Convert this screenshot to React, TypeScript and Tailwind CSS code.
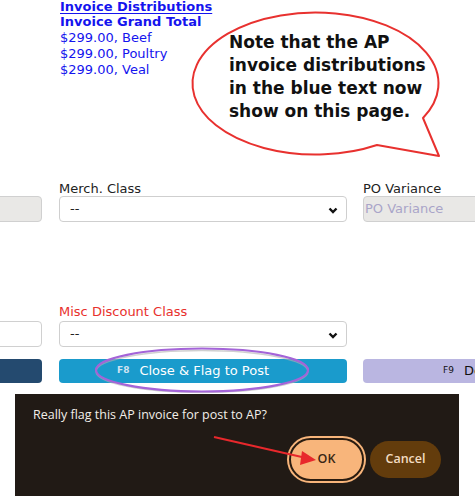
import React from "react";

const page = { fontFamily: '"DejaVu Sans", Verdana, sans-serif' };
const dialogFont = { fontFamily: '"Open Sans", "Noto Sans", sans-serif' };

function Chevron() {
  return (
    <svg width="10" height="7" viewBox="0 0 10 7" className="absolute right-[8px] top-[10px]">
      <polyline points="1.5,1.5 5,5 8.5,1.5" fill="none" stroke="#111" strokeWidth="2.4" />
    </svg>
  );
}

function Select() {
  return (
    <div className="relative h-[26px] rounded-[4px] border border-[#cfcfcf] bg-white">
      <span className="absolute left-[10px] top-[4px] text-[13px] leading-4 text-[#222]">--</span>
      <Chevron />
    </div>
  );
}

export default function App() {
  return (
    <div className="relative h-[496px] w-[475px] overflow-hidden bg-white" style={page}>
      {/* distributions */}
      <div className="-mt-[1px] pl-[60px] text-[13px] leading-4 text-[#1414ee]">
        <div className="font-bold underline underline-offset-2">Invoice Distributions</div>
        <div className="-mt-[1px] font-bold">Invoice Grand Total</div>
        <div>$299.00, Beef</div>
        <div>$299.00, Poultry</div>
        <div>$299.00, Veal</div>
      </div>

      {/* row 1 */}
      <div className="mt-[103px] flex text-[13px]">
        <div className="-ml-[40px] w-[82px] shrink-0">
          <div className="h-[15px]" />
          <div className="h-[26px] rounded-[4px] border border-[#d0d0d0] bg-[#e9e8e6]" />
        </div>
        <div className="ml-[17px] w-[288px] shrink-0">
          <div className="h-[15px] leading-4 text-[#222]">Merch. Class</div>
          <Select />
        </div>
        <div className="ml-[16px] w-[288px] shrink-0">
          <div className="h-[15px] leading-4 text-[#222]">PO Variance</div>
          <div className="h-[26px] rounded-[4px] border border-[#d0d0d0] bg-[#e9e8e6] pl-[1px] pt-[4px] leading-4 text-[#a9a5c9]">
            PO Variance
          </div>
        </div>
      </div>

      {/* row 2 */}
      <div className="mt-[82px] flex text-[13px]">
        <div className="-ml-[40px] w-[82px] shrink-0">
          <div className="h-[17px]" />
          <div className="h-[26px] rounded-[4px] border border-[#d0d0d0] bg-white" />
        </div>
        <div className="ml-[17px] w-[288px] shrink-0">
          <div className="h-[17px] leading-4 text-[#e8302c]">Misc Discount Class</div>
          <Select />
        </div>
      </div>

      {/* buttons */}
      <div className="mt-[12px] flex h-[24px]">
        <div className="-ml-[40px] w-[82px] shrink-0 rounded-[4px] bg-[#244a6f]" />
        <div className="ml-[17px] flex w-[288px] shrink-0 items-center rounded-[4px] bg-[#1a9bcc] pl-[58px] text-white">
          <span className="mr-[10px] text-[9px] font-bold text-[#cfe3f2]">F8</span>
          <span className="text-[13px] leading-4">Close &amp; Flag to Post</span>
        </div>
        <div className="ml-[16px] flex w-[288px] shrink-0 items-center rounded-[4px] bg-[#bab6e1] pl-[80px] text-[#111]">
          <span className="mr-[10px] text-[9px]">F9</span>
          <span className="text-[13px] leading-4">Delete Invoice</span>
        </div>
      </div>

      {/* confirm dialog */}
      <div className="ml-[15px] mt-[11px] h-[110px] w-[444px] bg-[#211a15] px-[18px] pt-[12px]" style={dialogFont}>
        <div className="text-[12.5px] leading-[17px] text-[#f2eee9]">Really flag this AP invoice for post to AP?</div>
        <div className="mt-[15px] flex items-center justify-end gap-[6px]">
          <button className="h-[43px] w-[75px] rounded-full border-2 border-[#2a1c10] bg-[#f8b57b] text-[12.5px] font-semibold text-[#3a2614] ring-2 ring-[#f8b57b]">
            OK
          </button>
          <button className="h-[37px] w-[71px] rounded-full bg-[#633c0c] text-[12.5px] font-semibold text-[#f3dcc2]">
            Cancel
          </button>
        </div>
      </div>

      {/* annotations */}
      <svg className="pointer-events-none absolute left-0 top-0" width="475" height="496">
        <path
          d="M423 118 L439 156 L377 145 A123 71 0 1 1 423 118 Z"
          fill="white"
          stroke="#e8312f"
          strokeWidth="2"
          strokeLinejoin="round"
        />
        <ellipse cx="202" cy="371.5" rx="106" ry="21" fill="none" stroke="#b0b0b0" strokeWidth="1.5" opacity="0.6" />
        <ellipse cx="202" cy="370" rx="106" ry="21.5" fill="none" stroke="#a464d8" strokeWidth="2.2" />
        <line x1="214" y1="437" x2="304" y2="457.5" stroke="#e8282c" strokeWidth="2" />
        <polygon points="316,460 302,451 300,465" fill="#e8282c" />
      </svg>
      <div className="pointer-events-none absolute left-[229px] top-[31px] text-[17px] font-bold leading-[23px] text-[#111]">
        Note that the AP
        <br />
        invoice distributions
        <br />
        in the blue text now
        <br />
        show on this page.
      </div>
    </div>
  );
}
